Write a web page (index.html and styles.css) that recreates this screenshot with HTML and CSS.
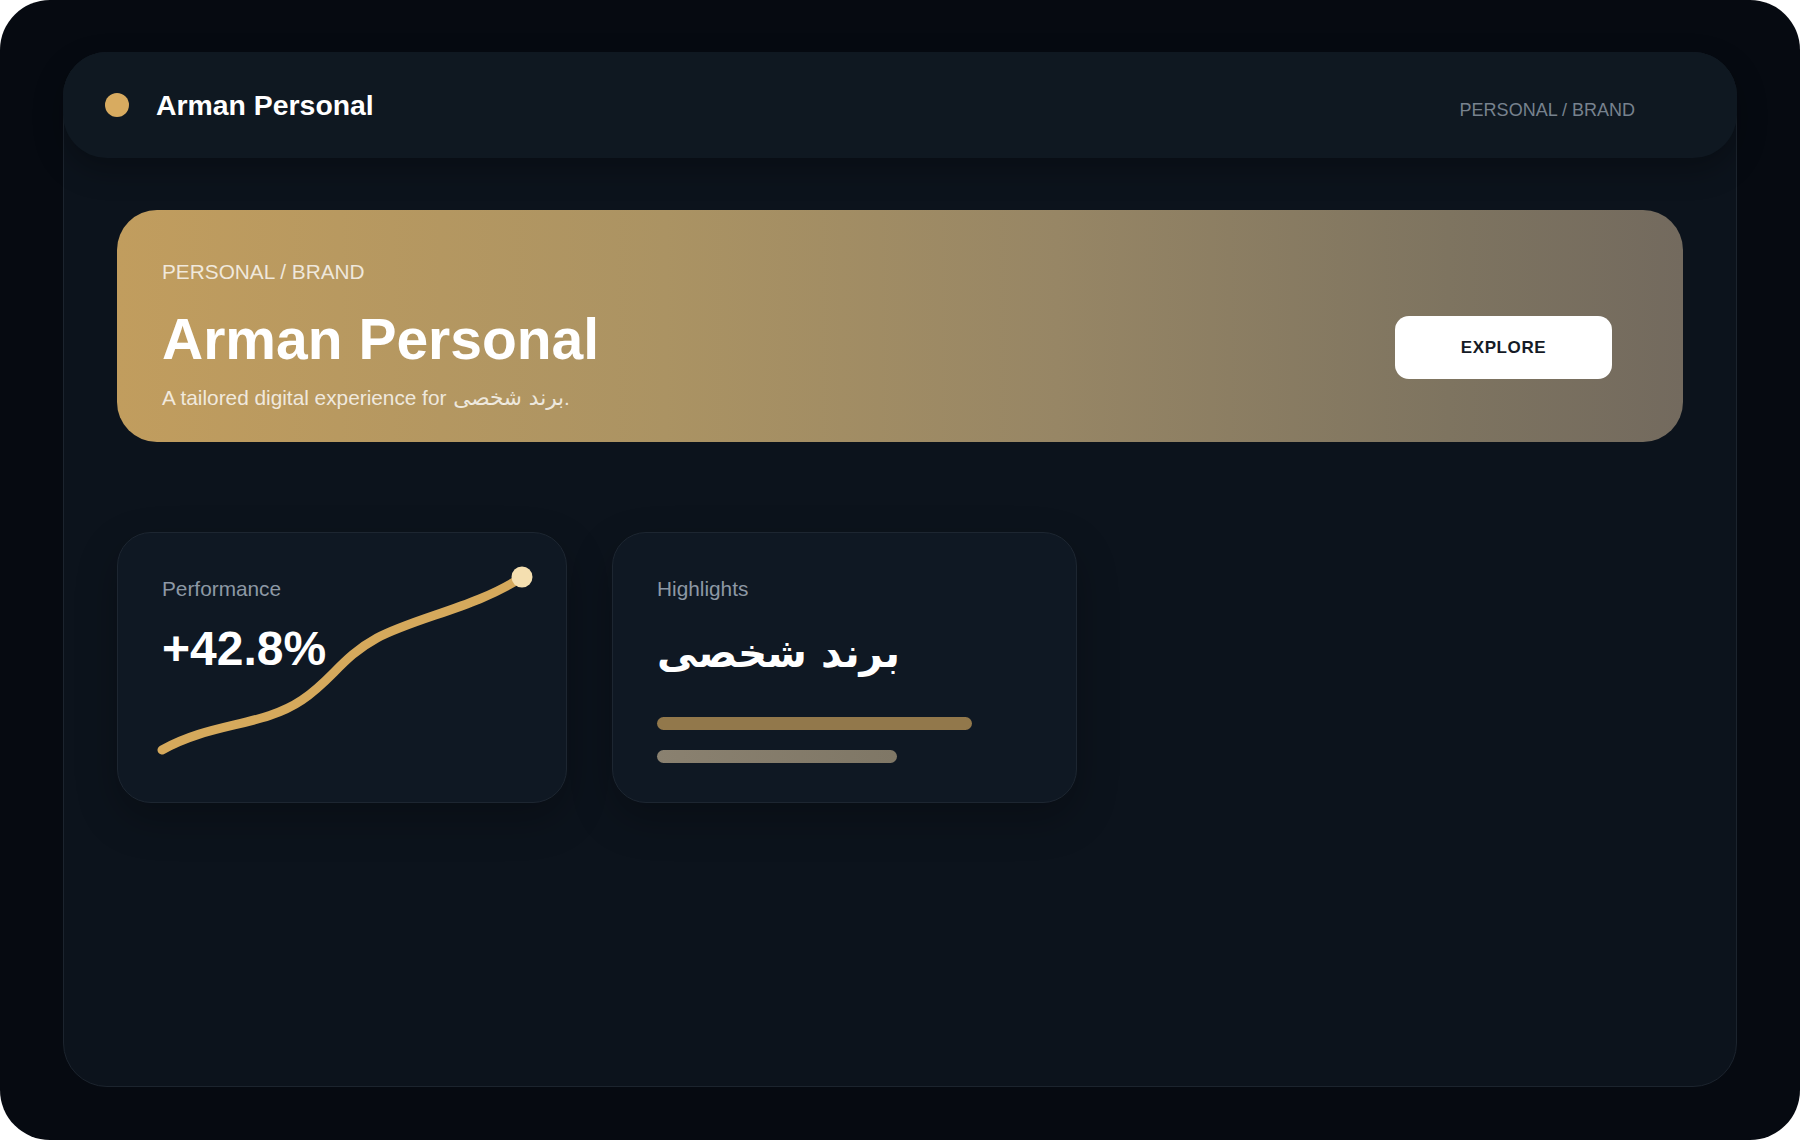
FILE: index.html
```html
<!DOCTYPE html>
<html lang="en">
<head>
<meta charset="utf-8">
<title>Arman Personal</title>
<link rel="stylesheet" href="styles.css">
</head>
<body>
<div class="frame">
  <div class="panel">
    <header class="topbar">
      <div class="brand">
        <span class="dot"></span>
        <span class="brand-name">Arman Personal</span>
      </div>
      <div class="crumb">PERSONAL / BRAND</div>
    </header>
    <main class="content">
      <section class="hero">
        <div class="hero-text">
          <div class="hero-label">PERSONAL / BRAND</div>
          <h1 class="hero-title">Arman Personal</h1>
          <p class="hero-sub">A tailored digital experience for <span class="fa" lang="fa">برند شخصی</span>.</p>
        </div>
        <button class="explore" type="button">EXPLORE</button>
      </section>
      <section class="cards">
        <div class="card card-perf">
          <svg class="chart" viewBox="0 0 448 269" width="448" height="269" aria-hidden="true">
            <path d="M44 217 C94 189, 144 194, 184 167 C214 147, 224 124, 259 105 C299 84, 359 74, 404 44" fill="none" stroke="#d5a95c" stroke-width="9" stroke-linecap="round"/>
            <circle cx="404" cy="44" r="10.5" fill="#f5dfb0"/>
          </svg>
          <div class="card-label">Performance</div>
          <div class="stat">+42.8%</div>
        </div>
        <div class="card card-high">
          <div class="card-label">Highlights</div>
          <div class="fa-title" lang="fa" dir="rtl">برند شخصی</div>
          <div class="bars">
            <div class="bar bar-gold"></div>
            <div class="bar bar-grey"></div>
          </div>
        </div>
      </section>
    </main>
  </div>
</div>
</body>
</html>
```

FILE: styles.css
```css
* {
  box-sizing: border-box;
}

html, body {
  margin: 0;
  padding: 0;
  background: #ffffff;
}

body {
  font-family: "Liberation Sans", Arial, "DejaVu Sans", sans-serif;
  color: #ffffff;
}

.frame {
  width: 1800px;
  height: 1140px;
  background: #060a11;
  border-radius: 50px;
  padding: 52px 63px 53px 63px;
  display: flex;
}

.panel {
  flex: 1;
  background: #0c131c;
  border: 1px solid #1c242e;
  border-radius: 44px;
  display: flex;
  flex-direction: column;
}

.topbar {
  height: 106px;
  margin: -1px -1px 0 -1px;
  background: #0f1821;
  border-radius: 44px;
  box-shadow: 0 12px 30px rgba(0, 0, 0, 0.28);
  display: flex;
  align-items: center;
  justify-content: space-between;
  padding: 0 102px 0 42px;
}

.brand {
  display: flex;
  align-items: center;
  gap: 27px;
}

.dot {
  width: 24px;
  height: 24px;
  border-radius: 50%;
  background: #d8ab60;
}

.brand-name {
  font-size: 28.4px;
  font-weight: 700;
  color: #ffffff;
}

.crumb {
  margin-top: 11px;
  font-size: 18px;
  color: #77828e;
}

.content {
  padding: 52px 53px 0 53px;
}

.hero {
  height: 232px;
  border-radius: 40px;
  background: linear-gradient(90deg, #c19d5e 0%, #ab9363 35%, #978665 60%, #7e7460 85%, #736a5e 100%);
  display: flex;
  justify-content: space-between;
  align-items: flex-start;
  padding: 50px 71px 0 45px;
}

.hero-label {
  font-size: 20.8px;
  line-height: 24px;
  color: rgba(255, 255, 255, 0.78);
}

.hero-title {
  margin: 24px 0 0 0;
  font-size: 57px;
  line-height: 62px;
  font-weight: 700;
  color: #ffffff;
}

.hero-sub {
  margin: 15px 0 0 0;
  font-size: 20.8px;
  line-height: 25px;
  color: rgba(255, 255, 255, 0.8);
}

.fa {
  font-family: "DejaVu Sans", sans-serif;
  font-size: 21.6px;
  margin-left: 1px;
}

.explore {
  margin-top: 56px;
  width: 217px;
  height: 63px;
  border: none;
  border-radius: 14px;
  background: #ffffff;
  color: #151b26;
  font-family: "Liberation Sans", Arial, sans-serif;
  font-size: 17px;
  font-weight: 700;
  letter-spacing: 0.6px;
  cursor: pointer;
}

.cards {
  margin-top: 90px;
  display: flex;
  gap: 45px;
}

.card {
  position: relative;
  height: 271px;
  background: #0f1823;
  border: 1px solid #1d2631;
  border-radius: 34px;
  padding: 43px 45px 0 44px;
  box-shadow: 0 16px 40px rgba(0, 0, 0, 0.25);
}

.card-perf {
  width: 450px;
}

.card-high {
  width: 465px;
}

.chart {
  position: absolute;
  left: 0;
  top: 0;
}

.card-label {
  position: relative;
  font-size: 20.8px;
  line-height: 25px;
  color: #8d98a5;
}

.stat {
  position: relative;
  margin-top: 20px;
  font-size: 48px;
  line-height: 56px;
  font-weight: 700;
  color: #ffffff;
}

.fa-title {
  margin-top: 28px;
  font-family: "DejaVu Sans", sans-serif;
  font-size: 40.5px;
  line-height: 48px;
  font-weight: 700;
  color: #ffffff;
  text-align: left;
  width: max-content;
}

.bars {
  margin-top: 40px;
  display: flex;
  flex-direction: column;
  gap: 20px;
}

.bar {
  height: 13px;
  border-radius: 7px;
}

.bar-gold {
  width: 315px;
  background: #92784b;
}

.bar-grey {
  width: 240px;
  background: linear-gradient(90deg, #8a8170, #7f7766);
}
```
